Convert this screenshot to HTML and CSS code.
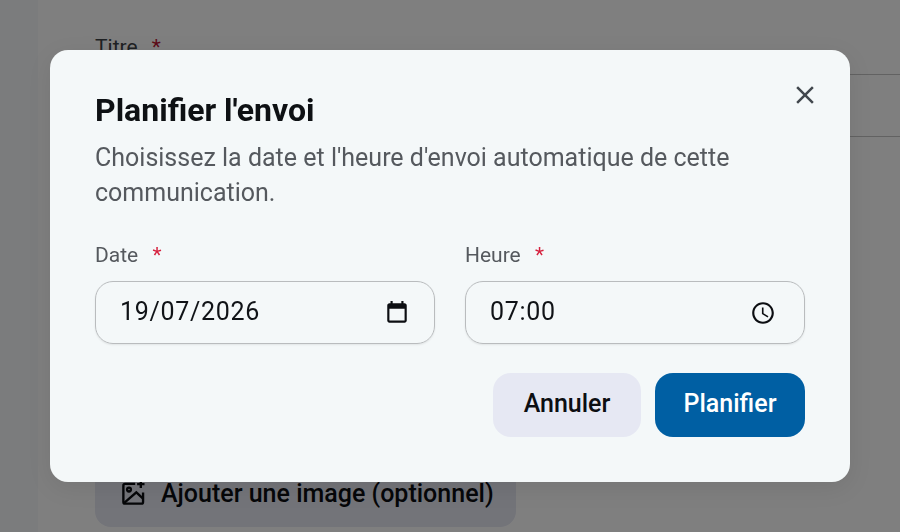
FILE: index.html
```html
<!DOCTYPE html>
<html lang="fr">
<head>
<meta charset="utf-8">
<title>Planifier l'envoi</title>
<link rel="stylesheet" href="styles.css">
</head>
<body>
<div class="page">
  <aside class="rail"></aside>
  <main class="form">
    <label class="bg-label">Titre <span class="req">*</span></label>
    <div class="bg-input"></div>
    <div class="spacer"></div>
    <button class="bg-add" type="button">
      <svg class="bg-icon" viewBox="0 0 24 24"><path d="M13.5 3.5H4.5a1.5 1.5 0 0 0-1.5 1.5v14.5a1.5 1.5 0 0 0 1.5 1.5h14.5a1.5 1.5 0 0 0 1.5-1.5V11"/><path d="M3.5 20.5 14.5 11l6 5.5"/><circle cx="8" cy="8.5" r="1.7"/><path d="M18.5 0.5v6.5M15.2 3.7h6.6"/></svg>
      <span>Ajouter une image (optionnel)</span>
    </button>
  </main>
</div>
<div class="overlay"></div>
<section class="dialog">
  <button class="close" type="button" aria-label="Fermer">
    <svg viewBox="0 0 24 24"><path d="M19 6.41 17.59 5 12 10.59 6.41 5 5 6.41 10.59 12 5 17.59 6.41 19 12 13.41 17.59 19 19 17.59 13.41 12z"/></svg>
  </button>
  <h2 class="title">Planifier l'envoi</h2>
  <p class="desc">Choisissez la date et l'heure d'envoi automatique de cette communication.</p>
  <div class="fields">
    <div class="field">
      <label class="label">Date <span class="req">*</span></label>
      <div class="input">
        <span class="value">19/07/2026</span>
        <svg class="picker" viewBox="0 0 24 24"><path d="M19 3h-1V1h-2v2H8V1H6v2H5c-1.11 0-1.99.9-1.99 2L3 19c0 1.1.89 2 2 2h14c1.1 0 2-.9 2-2V5c0-1.1-.9-2-2-2zm0 16H5V8h14v11z"/></svg>
      </div>
    </div>
    <div class="field">
      <label class="label">Heure <span class="req">*</span></label>
      <div class="input">
        <span class="value">07:00</span>
        <svg class="picker clock" viewBox="0 0 24 24"><path d="M11.99 2C6.47 2 2 6.48 2 12s4.47 10 9.99 10C17.52 22 22 17.52 22 12S17.52 2 11.99 2zM12 20c-4.42 0-8-3.58-8-8s3.58-8 8-8 8 3.58 8 8-3.58 8-8 8zm.5-13H11v6l5.25 3.15.75-1.23-4.5-2.67z"/></svg>
      </div>
    </div>
  </div>
  <div class="actions">
    <button class="btn cancel" type="button">Annuler</button>
    <button class="btn primary" type="button">Planifier</button>
  </div>
</section>
</body>
</html>
```

FILE: styles.css
```css
* { box-sizing: border-box; }
html, body { margin: 0; height: 100%; overflow: hidden; }
body { font-family: Roboto, "Liberation Sans", sans-serif; background: #fff; }
button { font-family: inherit; border: 0; padding: 0; }

.page { display: flex; width: 900px; height: 532px; background: #fff; }
.rail { flex: none; width: 38px; background: #f6f8fa; }
.form { flex: 1; min-width: 0; display: flex; flex-direction: column; padding: 35px 0 5px 57px; }
.bg-label { font-size: 21px; line-height: 24px; color: #3f4347; }
.req { color: #ba1a35; margin-left: 9px; }
.bg-input { margin-top: 15px; height: 63px; border: 1.5px solid #c4c4c4; border-right: 0; border-radius: 12px 0 0 12px; }
.spacer { flex: 1; }
.bg-add { display: flex; align-items: center; gap: 14px; width: 421px; height: 68px; padding: 0 0 0 25px; background: #e6e8f3; border-radius: 16px; color: #0c0e12; font-size: 25px; font-weight: 500; white-space: nowrap; }
.bg-icon { width: 27px; height: 27px; fill: none; stroke: #0c0e12; stroke-width: 2.1; flex: none; }

.overlay { position: fixed; inset: 0; background: rgba(0, 0, 0, 0.5); }
.dialog { position: absolute; left: 50px; top: 50px; width: 800px; height: 432px; padding: 40px 45px 0; background: #f4f8f9; border-radius: 18px; box-shadow: 0 6px 24px rgba(0, 0, 0, 0.08); display: flex; flex-direction: column; }
.close { position: absolute; top: 27px; right: 27px; width: 36px; height: 36px; background: none; display: flex; align-items: center; justify-content: center; }
.close svg { width: 30px; height: 30px; fill: #41474d; }
.title { margin: 0; font-size: 32px; line-height: 40px; font-weight: 700; color: #0e1114; }
.desc { margin: 10px 0 0; font-size: 25px; line-height: 35px; color: #55595e; }
.fields { display: grid; grid-template-columns: 1fr 1fr; gap: 30px; margin-top: 33px; }
.label { display: block; font-size: 21px; line-height: 24px; color: #55595e; }
.label .req { color: #d6223f; margin-left: 9px; }
.input { margin-top: 14px; height: 63px; border: 1.5px solid #b9bcbe; border-radius: 18px; display: flex; align-items: center; justify-content: space-between; padding: 0 24px; box-shadow: 0 1px 2px rgba(0, 0, 0, 0.08); }
.value { font-size: 25px; letter-spacing: 0.7px; color: #101317; margin-top: -3px; }
.picker { width: 26px; height: 26px; fill: #0c0e12; flex: none; }
.clock { margin-right: 4px; }
.actions { display: flex; justify-content: flex-end; gap: 14px; margin-top: 29px; }
.btn { height: 64px; padding-bottom: 3px; border-radius: 18px; font-size: 25px; font-weight: 500; }
.cancel { width: 148px; background: #e6e8f3; color: #0c0e12; }
.primary { width: 150px; background: #005fa3; color: #fff; }
```
